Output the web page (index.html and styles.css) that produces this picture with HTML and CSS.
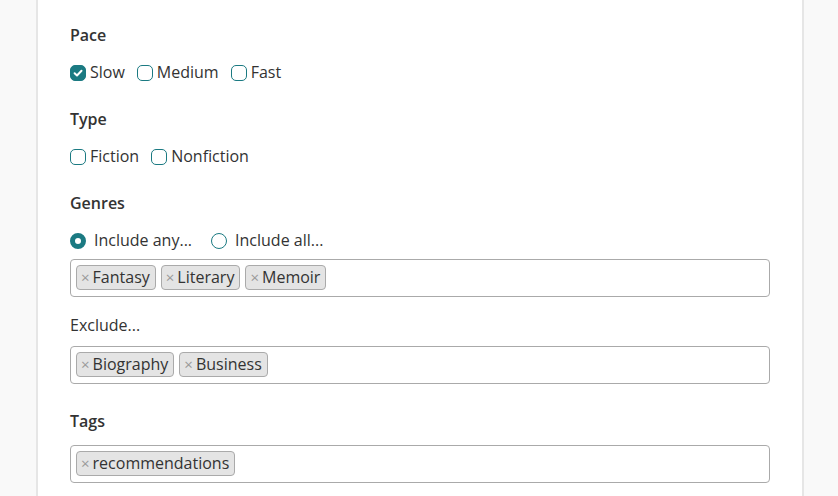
FILE: index.html
```html
<!DOCTYPE html>
<html>
<head>
<meta charset="utf-8">
<link rel="stylesheet" href="styles.css">
</head>
<body>
<div class="page">
  <div class="card">
    <div class="label first">Pace</div>
    <div class="options">
      <label class="opt"><span class="cb checked"><svg viewBox="0 0 16 16" width="16" height="16"><path d="M4.6 8.3 L7 10.5 L11.5 5.8" fill="none" stroke="#fff" stroke-width="2" stroke-linecap="round" stroke-linejoin="round"/></svg></span>Slow</label>
      <label class="opt"><span class="cb"></span>Medium</label>
      <label class="opt"><span class="cb"></span>Fast</label>
    </div>
    <div class="label">Type</div>
    <div class="options">
      <label class="opt"><span class="cb"></span>Fiction</label>
      <label class="opt"><span class="cb"></span>Nonfiction</label>
    </div>
    <div class="label">Genres</div>
    <div class="options radios">
      <label class="opt"><span class="rb checked"></span>Include any...</label>
      <label class="opt"><span class="rb"></span>Include all...</label>
    </div>
    <div class="tagbox first-box">
      <span class="chip"><span class="x">×</span>Fantasy</span>
      <span class="chip"><span class="x">×</span>Literary</span>
      <span class="chip"><span class="x">×</span>Memoir</span>
    </div>
    <div class="sublabel">Exclude...</div>
    <div class="tagbox">
      <span class="chip"><span class="x">×</span>Biography</span>
      <span class="chip"><span class="x">×</span>Business</span>
    </div>
    <div class="label tags">Tags</div>
    <div class="tagbox last-box">
      <span class="chip"><span class="x">×</span>recommendations</span>
    </div>
  </div>
</div>
</body>
</html>
```
FILE: styles.css
```css
* { box-sizing: border-box; }
html, body {
  margin: 0;
  padding: 0;
  background: #f9f9f9;
  font-family: "Open Sans", "Noto Sans", sans-serif;
  font-size: 16px;
  color: #333;
  overflow: hidden;
}
.page {
  display: flex;
  height: 496px;
  padding-left: 36px;
}
.card {
  width: 768px;
  background: #fff;
  border-left: 2px solid #e6e6e6;
  border-right: 2px solid #e6e6e6;
  padding: 23px 32px 0 32px;
  height: 496px;
}
.label {
  font-weight: 600;
  line-height: 24px;
  margin-top: 23px;
}
.label.first { margin-top: 0; }
.label.tags { margin-top: 25px; }
.options {
  display: flex;
  margin-top: 13px;
  line-height: 24px;
}
.opt {
  display: flex;
  align-items: center;
  margin-right: 12px;
}
.cb {
  width: 16px;
  height: 16px;
  border: 1.5px solid #1b7a82;
  border-radius: 5px;
  margin-right: 4px;
  display: inline-flex;
  align-items: center;
  justify-content: center;
  position: relative;
  top: 1px;
}
.cb.checked {
  background: #1b7a82;
  border-color: #1b7a82;
}
.cb svg { display: block; flex: none; }
.radios .opt { margin-right: 19px; }
.rb {
  width: 16px;
  height: 16px;
  border: 1.5px solid #1b7a82;
  border-radius: 50%;
  margin-right: 8px;
  position: relative;
  top: 1px;
}
.rb.checked {
  border: 5px solid #1b7a82;
  background: #fff;
}
.tagbox {
  width: 700px;
  height: 38px;
  border: 1px solid #aaa;
  border-radius: 4px;
  padding: 5px 5px;
  display: flex;
  gap: 5px;
  align-items: flex-start;
  margin-top: 9px;
}
.tagbox.first-box { margin-top: 7px; }
.tagbox.last-box { margin-top: 12px; }
.chip {
  height: 25px;
  background: #e4e4e4;
  border: 1px solid #aaa;
  border-radius: 4px;
  padding: 0 5px 0 4px;
  display: inline-flex;
  align-items: center;
  line-height: 23px;
  color: #333;
}
.chip .x {
  color: #999;
  font-size: 15px;
  margin-right: 3px;
}
.sublabel {
  line-height: 24px;
  margin-top: 16px;
}
```
